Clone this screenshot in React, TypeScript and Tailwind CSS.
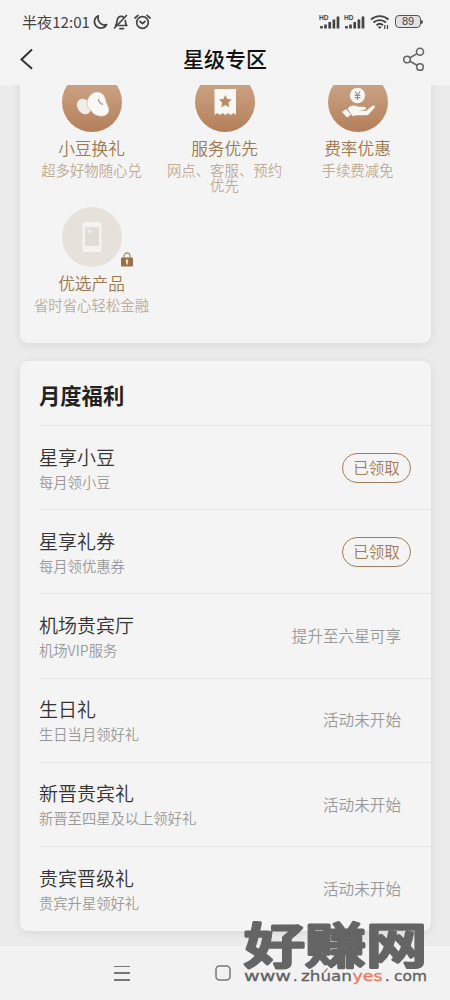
import React from 'react';

interface Service {
    readonly title: string;
    readonly desc: string;
    readonly icon: React.ReactNode;
    readonly locked?: boolean;
}

interface Benefit {
    readonly title: string;
    readonly desc: string;
    readonly status: string;
    readonly claimed?: boolean;
}

function BeansIcon() {
    return (
        <svg className="size-[60px]" viewBox="0 0 60 60">
            <ellipse cx="22" cy="34.500" rx="8.300" ry="6.600" transform="rotate(55 22 34.500)" fill="#f1ebe6" />
            <path d="M29 22.500c4-3.500 9.500-3.300 12.500.5 2 2.500 2 5 3 8s3.500 5.500 2 9c-1.500 4-6.500 5-11.500 3.500-4-1.200-5-4-7.500-6.500-4-4-2.500-11 1.500-14.500z" fill="#faf8f6" stroke="#d6bba7" strokeWidth=".7" />
            <path d="M36.500 27.500c.2 2 1.800 4 4 4.800" fill="none" stroke="#aaa097" strokeWidth="1.500" strokeLinecap="round" />
        </svg>
    );
}

function TicketIcon() {
    return (
        <svg className="size-[60px]" viewBox="0 0 60 60">
            <path d="M19.500 17H41v26l-2.600-2-2.700 2-2.700-2-2.700 2-2.700-2-2.700 2-2.700-2-2.700 2z" fill="#faf6f3" />
            <path d="m30.300 23 1.900 4.100 4.500.5-3.300 3.100.9 4.500-4-2.200-4 2.200.9-4.500-3.300-3.100 4.500-.5z" fill="#b88b69" />
        </svg>
    );
}

function HandIcon() {
    return (
        <svg className="size-[60px]" viewBox="0 0 60 60">
            <circle cx="29.500" cy="23.500" r="7.700" fill="#faf6f3" />
            <path d="m27 19.500 2.500 3.500 2.500-3.500M29.500 23v5M26.700 23.300h5.600M26.700 25.700h5.600" fill="none" stroke="#999089" strokeWidth="1.200" />
            <path d="m14 40 4-3 5 5.500-4 3z" fill="#faf6f3" />
            <path d="M19.500 36.500c3-3 6.500-3.700 9.500-2.200 2.500 1 6 .2 8 .7 1.800.7 1.200 2.300-.5 2.700L31 38.800h7l6.500-5c1.500-1 3.300.5 2 2L41 42c-1.500 1.300-3 1.500-5 1.300h-6c-2-.1-4 .2-5.500.7z" fill="#faf6f3" />
        </svg>
    );
}

function PhoneIcon() {
    return (
        <svg className="size-[60px]" viewBox="0 0 60 60">
            <rect x="20.500" y="15" width="19" height="30" rx="2.500" fill="#f5f3f0" />
            <rect x="23" y="20" width="14" height="19" fill="#e2dcd7" />
            <circle cx="27.500" cy="24.500" r="1.800" fill="#f2eeeb" />
        </svg>
    );
}

function LockIcon() {
    return (
        <svg className="absolute left-[59px] top-[45px] h-[15px] w-3" viewBox="0 0 12 15">
            <path d="M3 6V4a3 3 0 0 1 6 0v2" fill="none" stroke="#aa917a" strokeWidth="1.300" />
            <rect y="5.500" width="12" height="9" rx="1" fill="#9a7048" />
            <path d="M6 8v4" stroke="#eee3d8" strokeWidth="1.500" strokeLinecap="round" />
            <circle cx="6" cy="9" r="1.300" fill="#eee3d8" />
        </svg>
    );
}

const services: Service[] = [
    { title: '小豆换礼', desc: '超多好物随心兑', icon: <BeansIcon /> },
    { title: '服务优先', desc: '网点、客服、预约优先', icon: <TicketIcon /> },
    { title: '费率优惠', desc: '手续费减免', icon: <HandIcon /> },
    { title: '优选产品', desc: '省时省心轻松金融', icon: <PhoneIcon />, locked: true },
];

const benefits: Benefit[] = [
    { title: '星享小豆', desc: '每月领小豆', status: '已领取', claimed: true },
    { title: '星享礼券', desc: '每月领优惠券', status: '已领取', claimed: true },
    { title: '机场贵宾厅', desc: '机场VIP服务', status: '提升至六星可享' },
    { title: '生日礼', desc: '生日当月领好礼', status: '活动未开始' },
    { title: '新晋贵宾礼', desc: '新晋至四星及以上领好礼', status: '活动未开始' },
    { title: '贵宾晋级礼', desc: '贵宾升星领好礼', status: '活动未开始' },
];

function SignalIcon() {
    return (
        <svg className="h-4 w-[22px]" viewBox="0 0 22 16">
            <text x="0" y="5.500" fontSize="6.500" fontWeight="700" fontFamily="Liberation Sans" fill="#444" textLength="9.500" lengthAdjust="spacingAndGlyphs">HD</text>
            <path d="M2.500 12v2.500M6.500 10.500v4M10.700 8v6.500M14.900 5.500v9M19 2.500v12" stroke="#444" strokeWidth="2.700" />
        </svg>
    );
}

function StatusBar() {
    return (
        <div className="flex h-[43px] items-center pl-[22px] pr-[27px] text-[#444]">
            <span className="w-[68px] whitespace-nowrap text-[15.1px] leading-none">半夜12:01</span>
            <svg className="ml-[2px] h-[18px] w-[60px]" viewBox="0 0 60 18" fill="none" stroke="#444" strokeWidth="1.700" strokeLinecap="round" strokeLinejoin="round">
                <path d="M6.300 2.800a6.400 6.400 0 1 0 8.300 8.700C9.500 13.300 5 8.500 6.300 2.800z" />
                <path d="M23.500 12.500c2-2 1-5.500 2.500-7.500s4-2 5.500-.8M33.300 7.500c0 2 .3 3.500 1.500 5H27M28 15.700h3.500M34.500 2.500l-12 12.500" />
                <circle cx="50.500" cy="9.500" r="5.800" />
                <path d="m48 8.500 2.500 2 2.500-2M43 5l3-2.700M58 5l-3-2.700" />
            </svg>
            <div className="ml-auto flex items-center">
                <SignalIcon />
                <span className="ml-[3px] flex"><SignalIcon /></span>
                <svg className="ml-1 h-4 w-5" viewBox="0 0 20 16" fill="none" stroke="#444" strokeWidth="1.900">
                    <path d="M1 5.500c5-4.500 12.500-4.500 17.500 0M3.500 8.500c3.500-3.200 9-3.200 12.500 0M6.500 11.300c2-1.800 4.500-1.800 6.500 0" />
                    <path d="m7.500 12.500 2.300 2.500 2-2.500z" fill="#444" stroke="none" />
                    <path d="M14.800 11v4M17.500 11v4" strokeWidth="1.200" />
                </svg>
                <div className="ml-[5px] flex h-[13px] w-[26px] items-center justify-center rounded-[4px] border border-[#555] bg-[#e2e2e2] font-['Liberation_Sans',sans-serif] text-[11px] leading-none">89</div>
                <div className="h-1 w-[2px] rounded-r bg-[#555]" />
            </div>
        </div>
    );
}

function Header() {
    return (
        <header className="relative z-10 h-[85px] shrink-0 bg-[#f3f3f3]">
            <StatusBar />
            <div className="flex h-8 items-center justify-between pl-[19px] pr-[25px]">
                <svg className="h-[22px] w-4" viewBox="0 0 16 22" fill="none" stroke="#333" strokeWidth="2">
                    <path d="M13 1.500 2.500 11.500 13 20.800" />
                </svg>
                <h1 className="-mt-[2px] pl-3 text-[21px] font-medium leading-none text-[#111]">星级专区</h1>
                <svg className="h-6 w-[22px]" viewBox="0 0 22 24" fill="none" stroke="#666" strokeWidth="1.600">
                    <circle cx="4" cy="12.500" r="3.300" />
                    <circle cx="17" cy="4.800" r="3.500" />
                    <circle cx="17" cy="20.100" r="3.300" />
                    <path d="m7 10.800 7-4.200M7 14.300l7 4" />
                </svg>
            </div>
        </header>
    );
}

function ServiceItem({ service }: { readonly service: Service }) {
    return (
        <div className="flex h-[135px] flex-col items-center">
            <div className={`relative size-[60px] rounded-full ${service.locked ? 'bg-[#e7e1dc]' : 'bg-linear-to-b from-[#cfab8f] to-[#b47f59]'}`}>
                {service.icon}
                {service.locked && <LockIcon />}
            </div>
            <h3 className="mt-[6px] text-[16.7px] font-[350] leading-5 text-[#9f7750]">{service.title}</h3>
            <p className="mt-[4px] w-[118px] text-center text-[14.4px] font-[350] leading-[15px] text-[#c0ab98]">{service.desc}</p>
        </div>
    );
}

function BenefitRow({ benefit }: { readonly benefit: Benefit }) {
    return (
        <li className="ml-[19px] flex h-[84.2px] items-center justify-between border-t border-[#e3e3e3] pr-5">
            <div className="pt-px">
                <h3 className="text-[19px] font-[350] leading-[26px] text-[#333]">{benefit.title}</h3>
                <p className="text-[14.3px] font-[350] leading-[23px] text-[#999]">{benefit.desc}</p>
            </div>
            {benefit.claimed ? (
                <button className="h-[30px] w-[69px] rounded-full border border-[#a47c55] text-[15.5px] font-[350] text-[#a47c55]">{benefit.status}</button>
            ) : (
                <span className="pr-[10px] text-[15.6px] font-[350] text-[#999]">{benefit.status}</span>
            )}
        </li>
    );
}

function Watermark() {
    return (
        <svg className="absolute left-[240px] top-[900px] h-[100px] w-[192px]" viewBox="0 0 192 100">
            <text x="4" y="62.500" fontSize="48" fontWeight="500" textLength="183" lengthAdjust="spacingAndGlyphs" fill="#656565" stroke="#656565" strokeWidth="3" strokeLinejoin="round">好赚网</text>
            <g fontSize="14.500" fontFamily="DejaVu Sans" fill="#626262" stroke="#626262" strokeWidth=".3">
                <text x="4" y="81" textLength="47" lengthAdjust="spacingAndGlyphs">www</text>
                <text x="53" y="81">.</text>
                <text x="61" y="81" textLength="51" lengthAdjust="spacingAndGlyphs">zhuan</text>
                <text x="112.500" y="81" textLength="30" lengthAdjust="spacingAndGlyphs" fill="#f2785c" stroke="#f2785c">yes</text>
                <text x="145" y="81">.</text>
                <text x="154" y="81" textLength="33" lengthAdjust="spacingAndGlyphs">com</text>
            </g>
        </svg>
    );
}

export default function App() {
    return (
        <div className="relative flex h-[1000px] w-[450px] flex-col overflow-hidden bg-[#ebebeb] font-['Noto_Sans_CJK_SC',sans-serif]">
            <Header />
            <main className="flex min-h-0 flex-1 flex-col pl-5 pr-[19px]">
                <section className="-mt-[13px] grid h-[271px] shrink-0 grid-cols-[133px_133px_133px] content-start rounded-b-lg bg-[#f4f4f4] pl-[5px] shadow-[0_2px_10px_rgba(0,0,0,0.08)]">
                    {services.map((service) => (
                        <ServiceItem key={service.title} service={service} />
                    ))}
                </section>
                <section className="mt-[18px] h-[570px] shrink-0 rounded-lg bg-[#f4f4f4] shadow-[0_2px_10px_rgba(0,0,0,0.08)]">
                    <h2 className="flex h-16 items-center pl-[19px] pt-1 text-[21.3px] font-bold text-[#222]">月度福利</h2>
                    <ul>
                        {benefits.map((benefit) => (
                            <BenefitRow key={benefit.title} benefit={benefit} />
                        ))}
                    </ul>
                </section>
            </main>
            <nav className="relative flex h-[54px] shrink-0 items-center bg-[#f2f2f2] pl-[114px]">
                <div className="flex h-[15px] w-4 flex-col justify-between">
                    <i className="h-[1.5px] bg-[#777]" />
                    <i className="h-[1.5px] bg-[#777]" />
                    <i className="h-[1.5px] bg-[#777]" />
                </div>
                <svg className="ml-[85px] size-4" viewBox="0 0 16 16" fill="none" stroke="#777" strokeWidth="1.500">
                    <rect x="1" y="1" width="14" height="14" rx="3.500" />
                </svg>
                {/* tip of the back arrow, the rest sits under the watermark */}
                <svg className="mb-[3px] ml-[91px] h-4 w-2" viewBox="0 0 8 16" fill="none" stroke="#888" strokeWidth="1.300">
                    <path d="m2 8.500 3.500-4" />
                </svg>
            </nav>
            <Watermark />
        </div>
    );
}
